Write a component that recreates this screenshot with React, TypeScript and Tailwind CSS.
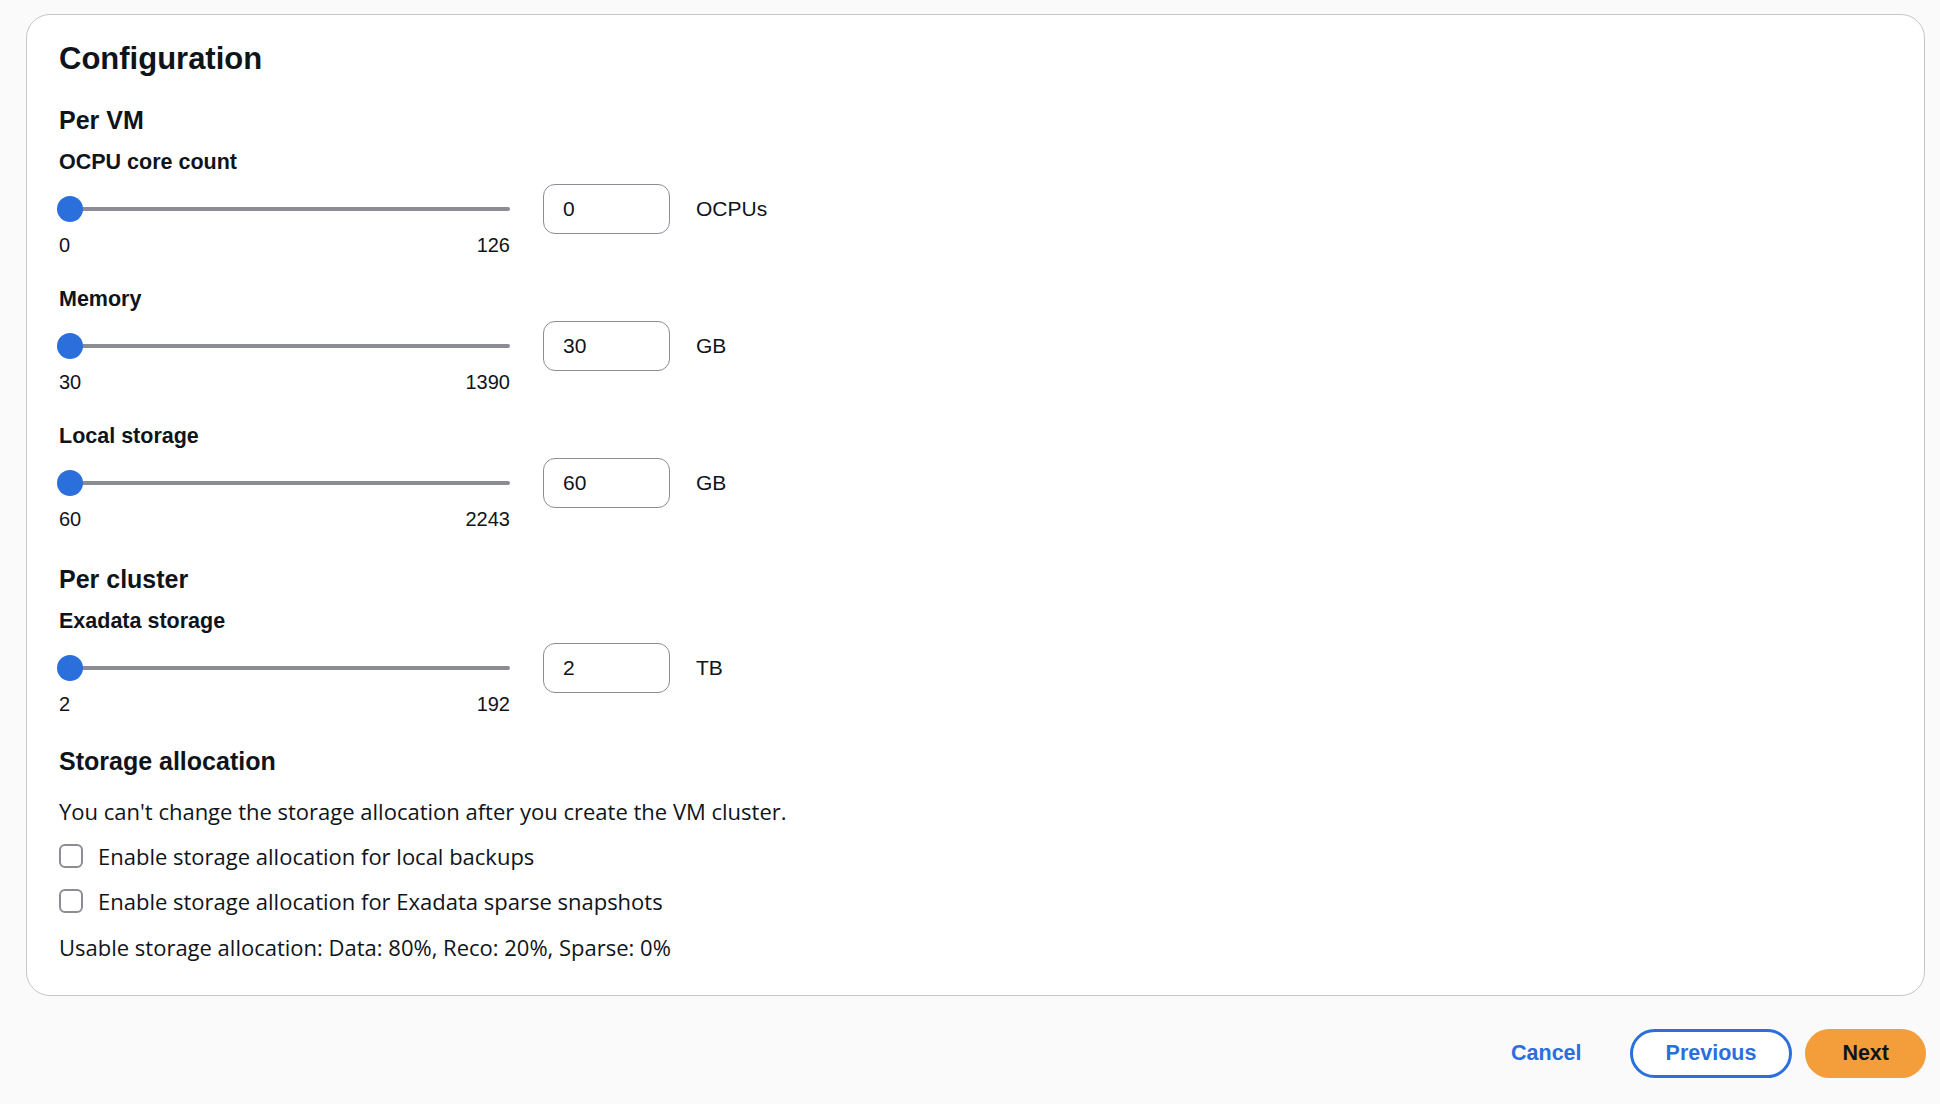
import React from "react";

// slider fields shown in the configuration card
type Field = {
  label: string;
  min: number;
  max: number;
  value: number;
  unit: string;
};

const perVm: Field[] = [
  { label: "OCPU core count", min: 0, max: 126, value: 0, unit: "OCPUs" },
  { label: "Memory", min: 30, max: 1390, value: 30, unit: "GB" },
  { label: "Local storage", min: 60, max: 2243, value: 60, unit: "GB" },
];

const perCluster: Field[] = [
  { label: "Exadata storage", min: 2, max: 192, value: 2, unit: "TB" },
];

const SliderField = ({ field }: { field: Field }) => {
  return (
    <div className="flex flex-col">
      <div className="text-[21.5px] leading-[30px] font-bold">{field.label}</div>
      <div className="mt-[7px] flex items-start">
        <div className="w-[451px]">
          <div className="relative h-[50px]">
            <div className="absolute left-0 right-0 top-[23px] h-[4px] rounded-full bg-[#8c8c94]" />
            <div className="absolute left-[-2px] top-[12px] h-[26px] w-[26px] rounded-full bg-[#2a6fdb]" />
          </div>
          <div className="flex justify-between text-[20px] leading-[22px]">
            <span>{field.min}</span>
            <span>{field.max}</span>
          </div>
        </div>
        <div className="ml-[33px] flex h-[50px] w-[127px] items-center rounded-[12px] border border-[#8c8c94] bg-white px-[19px] text-[21px]">
          {field.value}
        </div>
        <div className="ml-[26px] flex h-[50px] items-center text-[21px]">{field.unit}</div>
      </div>
    </div>
  );
};

const Checkbox = ({ label }: { label: string }) => (
  <label className="flex h-[30px] items-center gap-[15px]">
    <span className="h-[24px] w-[24px] rounded-[6px] border-2 border-[#8c8c94] bg-white" />
    <span>{label}</span>
  </label>
);

export default function App() {
  return (
    <div
      className="min-h-screen bg-[#fafafa] pt-[14px] text-[#0f141a]"
      style={{ fontFamily: '"Liberation Sans", Arial, sans-serif' }}
    >
      <div className="ml-[26px] mr-[15px] rounded-[24px] border border-[#c6c6cd] bg-white px-[32px] pt-[24px] pb-[33px]">
        <h1 className="text-[31px] leading-[40px] font-bold">Configuration</h1>

        <h2 className="mt-[25px] text-[25px] leading-[32px] font-bold">Per VM</h2>
        <div className="mt-[11px] flex flex-col gap-[28px]">
          {perVm.map((f) => (
            <SliderField key={f.label} field={f} />
          ))}
        </div>

        <h2 className="mt-[33px] text-[25px] leading-[32px] font-bold">Per cluster</h2>
        <div className="mt-[11px] flex flex-col">
          {perCluster.map((f) => (
            <SliderField key={f.label} field={f} />
          ))}
        </div>

        <h2 className="mt-[30px] text-[25px] leading-[32px] font-bold">Storage allocation</h2>
        <div
          className="mt-[19px] flex flex-col gap-[15px] text-[22px] leading-[30px]"
          style={{ fontFamily: '"Open Sans", "Liberation Sans", sans-serif' }}
        >
          <p>You can't change the storage allocation after you create the VM cluster.</p>
          <Checkbox label="Enable storage allocation for local backups" />
          <Checkbox label="Enable storage allocation for Exadata sparse snapshots" />
          <p className="mt-[1px]">Usable storage allocation: Data: 80%, Reco: 20%, Sparse: 0%</p>
        </div>
      </div>

      {/* Wizard actions */}
      <div className="mr-[14px] mt-[33px] flex justify-end gap-[13px] text-[21.5px] font-bold">
        <button className="h-[49px] rounded-full px-[35px] text-[#2a6fdb]">Cancel</button>
        <button className="h-[49px] rounded-full border-[3px] border-[#2a6fdb] bg-white px-[33px] text-[#2a6fdb]">
          Previous
        </button>
        <button className="h-[49px] rounded-full bg-[#f39d3b] px-[37px] text-[#0f141a]">Next</button>
      </div>
    </div>
  );
}
